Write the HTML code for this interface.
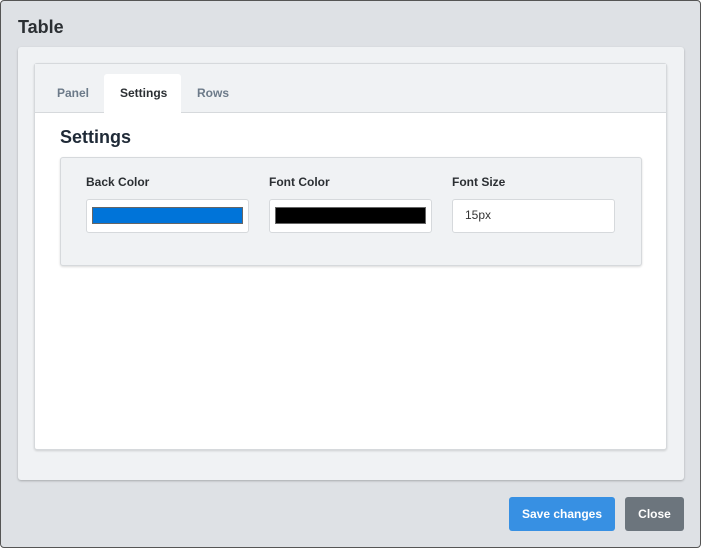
<!DOCTYPE html><html><head><style>
body{margin:0;width:701px;height:548px;overflow:hidden;font-family:"Liberation Sans",sans-serif;}
.w{position:absolute;left:0;top:0;width:699px;height:546px;border:1px solid #555;border-radius:4px;background:#dee1e5;}
.a{position:absolute}
</style></head><body><div class="w">
<div class="a" style="left:17px;top:16px;font-size:18px;font-weight:bold;color:#2b2f33">Table</div>
<div class="a" style="left:17px;top:46px;width:666px;height:433px;background:#f0f2f4;border-radius:3px;box-shadow:0 1px 2px rgba(0,0,0,.25)"></div>
<div class="a" style="left:33px;top:62px;width:631px;height:385px;background:#fff;border:1px solid #d6d9dc;border-radius:3px;box-shadow:0 1px 2px rgba(0,0,0,.15)"></div>
<div class="a" style="left:34px;top:63px;width:631px;height:48px;background:#f0f2f4;border-bottom:1px solid #d6d9dc"></div>
<div class="a" style="left:103px;top:73px;width:77px;height:39px;background:#fff;border-radius:3px 3px 0 0"></div>
<div class="a" style="left:56px;top:85px;font-size:12px;font-weight:bold;color:#6c7a89">Panel</div>
<div class="a" style="left:119px;top:85px;font-size:12px;font-weight:bold;color:#2b2f33">Settings</div>
<div class="a" style="left:196px;top:85px;font-size:12px;font-weight:bold;color:#6c7a89">Rows</div>
<div class="a" style="left:59px;top:126px;font-size:18px;font-weight:bold;color:#1f2a37">Settings</div>
<div class="a" style="left:59px;top:156px;width:580px;height:107px;background:#f0f2f4;border:1px solid #d6d9dc;border-radius:3px;box-shadow:0 1px 2px rgba(0,0,0,.15)"></div>
<div class="a" style="left:85px;top:174px;font-size:12px;font-weight:bold;color:#2b2f33">Back Color</div>
<div class="a" style="left:268px;top:174px;font-size:12px;font-weight:bold;color:#2b2f33">Font Color</div>
<div class="a" style="left:451px;top:174px;font-size:12px;font-weight:bold;color:#2b2f33">Font Size</div>
<div class="a" style="left:85px;top:198px;width:161px;height:32px;background:#fff;border:1px solid #d6d9dc;border-radius:3px"></div>
<div class="a" style="left:91px;top:206px;width:149px;height:15px;background:#0074d9;border:1px solid #666"></div>
<div class="a" style="left:268px;top:198px;width:161px;height:32px;background:#fff;border:1px solid #d6d9dc;border-radius:3px"></div>
<div class="a" style="left:274px;top:206px;width:149px;height:15px;background:#000;border:1px solid #666"></div>
<div class="a" style="left:451px;top:198px;width:161px;height:32px;background:#fff;border:1px solid #d6d9dc;border-radius:3px"></div>
<div class="a" style="left:464px;top:207px;font-size:12px;color:#333">15px</div>
<div class="a" style="left:508px;top:496px;width:106px;height:34px;background:#3790e3;border-radius:3px;color:#fff;font-size:12px;font-weight:bold;line-height:34px;text-align:center">Save changes</div>
<div class="a" style="left:624px;top:496px;width:59px;height:34px;background:#6c757d;border-radius:3px;color:#fff;font-size:12px;font-weight:bold;line-height:34px;text-align:center">Close</div>
</div></body></html>
